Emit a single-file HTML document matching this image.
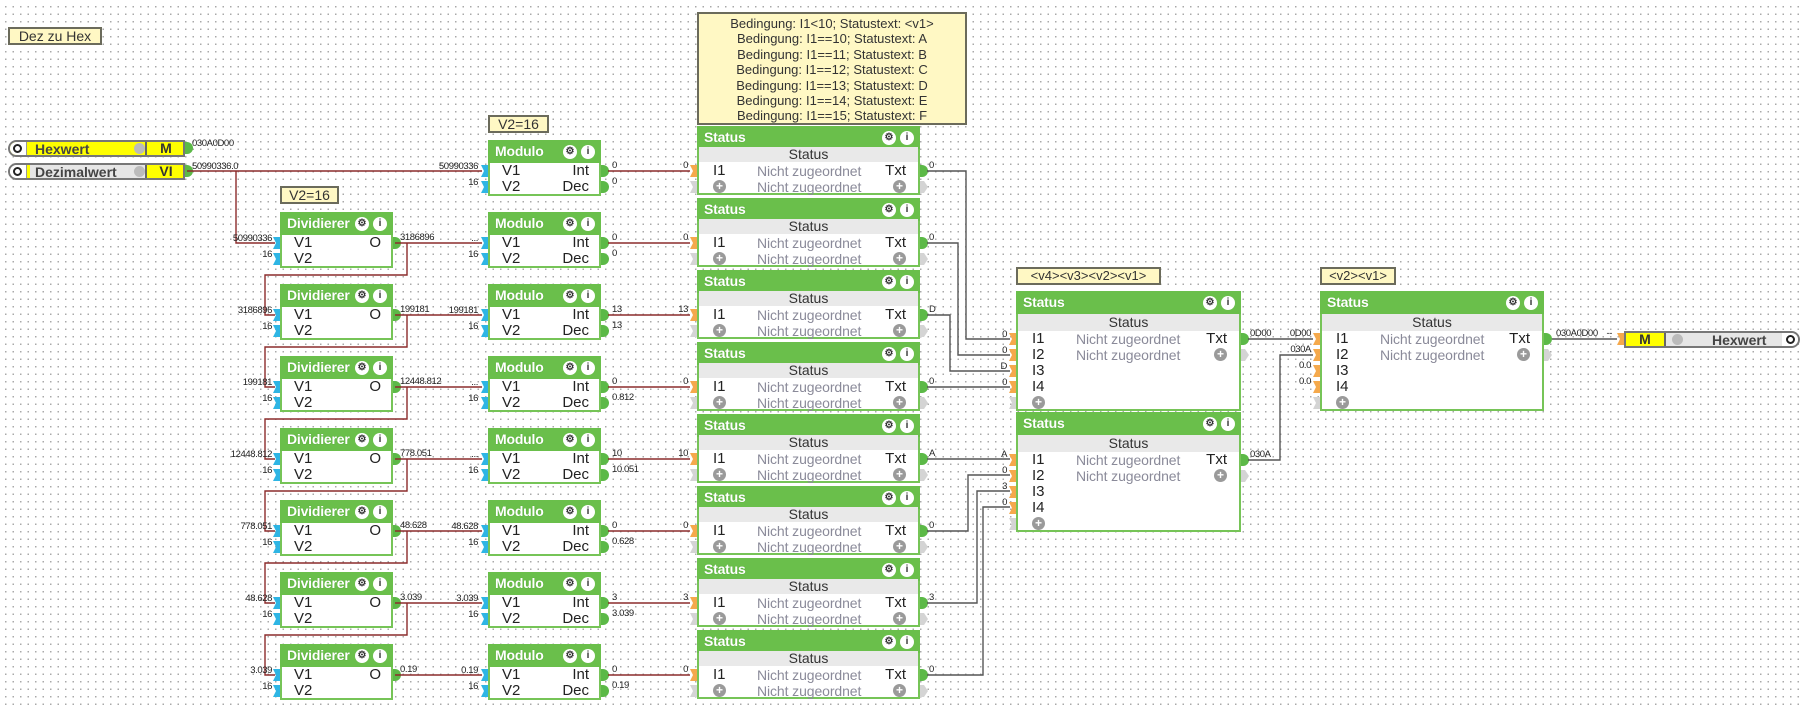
<!DOCTYPE html>
<html><head><meta charset="utf-8"><style>
*{margin:0;padding:0;box-sizing:border-box}
body{width:1802px;height:710px;overflow:hidden;background:#fff;font-family:"Liberation Sans",sans-serif}
#c{position:relative;width:1802px;height:710px;background-color:#fff;background-image:radial-gradient(circle,#a8a8a8 0.7px,transparent 0.9px);background-size:7.5px 7.5px;background-position:2px 3px}
svg{position:absolute;left:0;top:0}
.b{position:absolute;background:#fff;border:2px solid #76c457;border-top:none}
.hd{position:absolute;left:-2px;right:-2px;top:0;height:23px;background:#6abf4b;color:#fff;font-weight:bold;font-size:14px;letter-spacing:-0.2px;line-height:23px;padding-left:7px;text-shadow:0 0 1px #4a9a30;white-space:nowrap}
.ic{position:absolute;top:5px;width:14px;height:14px;border-radius:50%;background:#fff;color:#333;font-size:10px;line-height:14px;text-align:center;font-weight:bold;text-shadow:none;letter-spacing:0}
.r{position:absolute;font-size:15px;color:#222;line-height:16px;white-space:nowrap}
.g{color:#8a8a99;font-size:14px!important;letter-spacing:-0.1px}
.sub{position:absolute;left:0;right:0;background:#e9e9e9;text-align:center;font-size:14px;color:#333;line-height:15px}
.pl{position:absolute;width:13px;height:13px;border-radius:50%;background:#9a9a9a;color:#fff;font-size:12px;line-height:13px;text-align:center;font-weight:bold}
.cm{position:absolute;background:#fff8c4;border:2px solid #6b6b5b;color:#333;font-size:13px;text-align:center}
</style></head><body><div id="c"></div>
<script>
var H='',S='';
function ln(p,c){S+='<polyline points="'+p+'" fill="none" stroke="'+(c||'#8b2b2b')+'" stroke-width="1.4"/>';}
function tx(x,y,s,a){S+='<text x="'+x+'" y="'+y+'" font-size="9.5" font-family="Liberation Sans" letter-spacing="-0.4" fill="#222" text-anchor="'+(a||'start')+'">'+s+'</text>';}
function inp(x,y,c){S+='<path d="M'+(x-7)+' '+(y-6)+'h7v12h-7l3-6z" fill="'+c+'"/>';}
function outp(x,y,c){S+='<path d="M'+x+' '+(y-6)+'h2a6 6 0 0 1 0 12h-2z" fill="'+(c||'#5cb947')+'"/>';}
function gout(x,y){S+='<path d="M'+x+' '+(y-6)+'h4l4 6-4 6h-4z" fill="#d4d4d4"/>';}
function icons(w){return '<div class="ic" style="left:'+(w-38)+'px">&#9881;</div><div class="ic" style="left:'+(w-20)+'px">i</div>';}
function blk(x,y,w,h,t){return '<div class="b" style="left:'+x+'px;top:'+y+'px;width:'+w+'px;height:'+h+'px"><div class="hd">'+t+icons(w)+'</div>';}
function mod(x,y,t,a,b,c,d){
 H+=blk(x,y,113,56,t)+'<div class="r" style="left:12px;top:23px">'+a+'</div><div class="r" style="right:10px;top:23px">'+b+'</div><div class="r" style="left:12px;top:39px">'+c+'</div><div class="r" style="right:10px;top:39px">'+d+'</div></div>';
 inp(x,y+31,'#2eb5e4');inp(x,y+47,'#2eb5e4');outp(x+113,y+31);if(d)outp(x+113,y+47);
}
function st(x,y){
 H+=blk(x,y,223,69,'Status')+'<div class="sub" style="top:21px">Status</div><div class="r" style="left:14px;top:37px">I1</div><div class="r g" style="left:58px;top:37px">Nicht zugeordnet</div><div class="r" style="right:12px;top:37px">Txt</div><div class="pl" style="left:14px;top:54px">+</div><div class="r g" style="left:58px;top:53px">Nicht zugeordnet</div><div class="pl" style="right:12px;top:54px">+</div></div>';
 inp(x,y+45,'#f5a94c');outp(x+223,y+45);S+='<path d="M'+(x-7)+' '+(y+55)+'h7v12h-7l3-6z" fill="#d4d4d4"/>';gout(x+223,y+61);
}
function big(x,y,w){
 H+=blk(x,y,w,120,'Status')+'<div class="sub" style="top:23px;height:17px;line-height:17px">Status</div>';
 var L=['I1','I2','I3','I4'];
 for(var i=0;i<4;i++){H+='<div class="r" style="left:14px;top:'+(40+16*i)+'px">'+L[i]+'</div>';inp(x,y+48+16*i,'#f5a94c');}
 H+='<div class="pl" style="left:14px;top:105px">+</div><div class="r g" style="left:58px;top:40px">Nicht zugeordnet</div><div class="r g" style="left:58px;top:56px">Nicht zugeordnet</div><div class="r" style="right:12px;top:40px">Txt</div><div class="pl" style="right:12px;top:57px">+</div></div>';
 S+='<path d="M'+(x-7)+' '+(y+106)+'h7v12h-7l3-6z" fill="#d4d4d4"/>';outp(x+w,y+48);gout(x+w,y+64);
}
H+='<div class="cm" style="left:8px;top:27px;width:94px;height:18px;line-height:14px;font-size:14px">Dez zu Hex</div>';
H+='<div class="cm" style="left:488px;top:115px;width:61px;height:18px;line-height:14px;font-size:14px">V2=16</div>';
H+='<div class="cm" style="left:280px;top:186px;width:59px;height:18px;line-height:14px;font-size:14px">V2=16</div>';
H+='<div class="cm" style="left:697px;top:12px;width:270px;height:113px;line-height:15.4px;padding-top:2px">Bedingung: I1&lt;10; Statustext: &lt;v1&gt;<br>Bedingung: I1==10; Statustext: A<br>Bedingung: I1==11; Statustext: B<br>Bedingung: I1==12; Statustext: C<br>Bedingung: I1==13; Statustext: D<br>Bedingung: I1==14; Statustext: E<br>Bedingung: I1==15; Statustext: F</div>';
H+='<div class="cm" style="left:1016px;top:267px;width:145px;height:18px;line-height:14px">&lt;v4&gt;&lt;v3&gt;&lt;v2&gt;&lt;v1&gt;</div>';
H+='<div class="cm" style="left:1320px;top:267px;width:76px;height:18px;line-height:14px">&lt;v2&gt;&lt;v1&gt;</div>';
function bar(y,label,lab2,yel){
 H+='<div style="position:absolute;left:8px;top:'+y+'px;width:177px;height:17px;border:2px solid #777;border-radius:9px 0 0 9px;background:'+(yel?'#ffff00':'#e6e6e6')+';overflow:hidden">'
 +'<div style="position:absolute;left:0;top:0;width:17px;height:13px;background:#fff;border-right:1px solid #999"></div>'
 +'<div style="position:absolute;left:3px;top:2px;width:9px;height:9px;border-radius:50%;border:2.5px solid #222"></div>'
 +(yel?'':'<div style="position:absolute;left:17px;top:0;width:3px;height:13px;background:#ff0"></div>')
 +'<div style="position:absolute;left:25px;top:-1px;font-size:14px;font-weight:bold;color:#444">'+label+'</div>'
 +'<div style="position:absolute;left:124px;top:1px;width:11px;height:11px;border-radius:50%;background:#bbb"></div>'
 +'<div style="position:absolute;left:135px;top:-2px;width:42px;height:17px;background:#ff0;border:2px solid #666;text-align:center;font-size:14px;font-weight:bold;color:#333;line-height:13px">'+lab2+'</div></div>';
}
bar(140,'Hexwert','M',1);bar(163,'Dezimalwert','VI',0);
outp(185,148);outp(185,171);tx(192,146,'030A0D00');tx(192,169,'50990336.0');
H+='<div style="position:absolute;left:1624px;top:331px;width:176px;height:17px;border:2px solid #777;border-radius:0 9px 9px 0;background:#e6e6e6;overflow:hidden">'
+'<div style="position:absolute;left:-2px;top:-2px;width:42px;height:17px;background:#ff0;border:2px solid #666;text-align:center;font-size:14px;font-weight:bold;color:#333;line-height:13px">M</div>'
+'<div style="position:absolute;left:46px;top:1px;width:11px;height:11px;border-radius:50%;background:#bbb"></div>'
+'<div style="position:absolute;left:86px;top:-1px;font-size:14px;font-weight:bold;color:#444">Hexwert</div>'
+'<div style="position:absolute;right:0;top:0;width:16px;height:13px;background:#fff"></div>'
+'<div style="position:absolute;right:3px;top:2px;width:9px;height:9px;border-radius:50%;border:2.5px solid #222"></div></div>';
ln('187,171 482,171');ln('236,171 236,243 275,243');
var DV=['50990336','3186896','199181','12448.812','778.051','48.628','3.039'];
var DO=['3186896','199181','12448.812','778.051','48.628','3.039','0.19'];
var MV=['50990336','...','199181','...','...','48.628','3.039','0.19'];
var MI=['0','0','13','0','10','0','3','0'];
var MD=['0','0','13','0.812','10.051','0.628','3.039','0.19'];
var TX=['0','0','D','0','A','0','3','0'];
for(var k=0;k<8;k++){
 var y=140+72*k;
 mod(488,y,'Modulo','V1','Int','V2','Dec');
 tx(478,y+29,MV[k],'end');tx(478,y+45,'16','end');
 ln('608,'+(y+31)+' 690,'+(y+31));tx(612,y+28,MI[k]);tx(612,y+44,MD[k]);tx(688,y+28,MI[k],'end');
 st(697,126+72*k);
 tx(929,126+72*k+42,TX[k]);
}
for(var k=0;k<7;k++){
 var y=212+72*k;
 mod(280,y,'Dividierer','V1','O','V2','');
 tx(272,y+29,DV[k],'end');tx(272,y+45,'16','end');
 ln('395,'+(y+31)+' 482,'+(y+31));tx(400,y+28,DO[k]);
 if(k<6){ln('407,'+(y+31)+' 407,'+(y+63)+' 265,'+(y+63)+' 265,'+(y+103)+' 275,'+(y+103));}
}
var G='#555';
ln('927,171 966,171 966,339 1010,339',G);
ln('927,243 958,243 958,355 1010,355',G);
ln('927,315 950,315 950,371 1010,371',G);
ln('927,387 1010,387',G);
ln('927,459 1010,459',G);
ln('927,531 968,531 968,475 1010,475',G);
ln('927,603 977,603 977,491 1010,491',G);
ln('927,675 983,675 983,507 1010,507',G);
var AL=['0','0','D','0'],BL=['A','0','3','0'];
for(var i=0;i<4;i++){tx(1007,337+16*i,AL[i],'end');tx(1007,457+16*i,BL[i],'end');}
big(1016,291,225);big(1016,412,225);
tx(1250,336,'0D00');tx(1250,457,'030A');
ln('1248,339 1313,339',G);ln('1248,460 1280,460 1280,355 1313,355',G);
var CL=['0D00','030A','0.0','0.0'];
for(var i=0;i<4;i++)tx(1311,336+16*i,CL[i],'end');
big(1320,291,224);
ln('1552,339 1617,339',G);tx(1556,336,'030A0D00');tx(1612,336,'--','end');
inp(1624,339,'#f5a94c');
document.getElementById('c').innerHTML='<svg width="1802" height="710">'+S+'</svg>'+H;
</script></body></html>
